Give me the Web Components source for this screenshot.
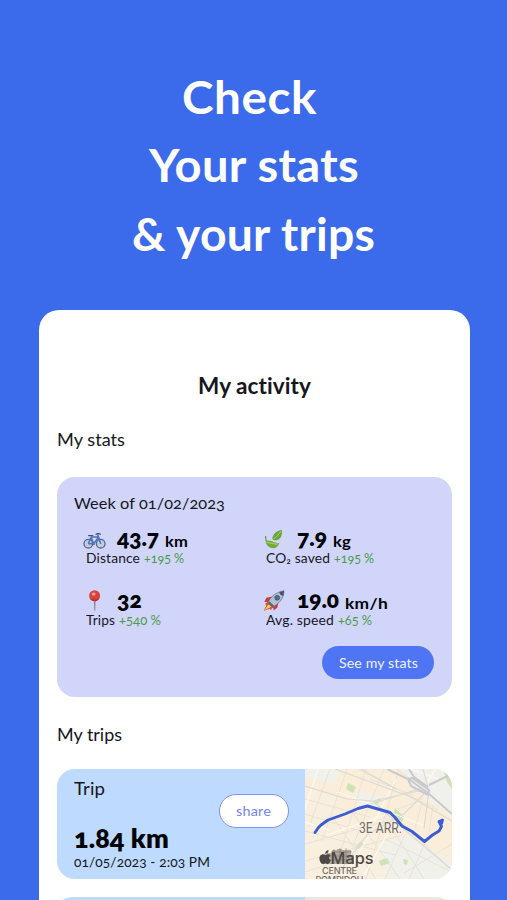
<!DOCTYPE html>
<html lang="en">
<head>
<meta charset="utf-8">
<meta name="viewport" content="width=device-width, initial-scale=1">
<title>My activity</title>
<style>
    body {
        margin: 0;
        height: 900px;
        overflow: hidden;
        background-color: #3b6bea;
        font-family: Lato, "Open Sans", sans-serif;
        font-variant-numeric: oldstyle-nums;
        color: #15171c;
    }
</style>
</head>
<body>
<activity-page></activity-page>

<script>
// One line of text, widened to the width given in its attribute
class FitLine extends HTMLElement {
    constructor() {
        super();
        this.shadowDOM = this.attachShadow({ mode: 'open' });
    }

    connectedCallback() {
        this.shadowDOM.innerHTML = `
            <style>
                :host {
                    display: inline-block;
                    flex: none;
                    width: ${this.getAttribute('width')}px;
                    text-align: left;
                    white-space: nowrap;
                }
                span {
                    display: inline-block;
                    transform-origin: 0 0;
                }
            </style>
            <span><slot></slot></span>
        `;
        this.fit();
    }

    fit() {
        const target = parseFloat(this.getAttribute('width'));
        const span = this.shadowDOM.querySelector('span');
        const natural = span.getBoundingClientRect().width;
        // a little of the difference goes between the letters, the rest widens them
        const gap = (target - natural) * 0.25 / this.textContent.length;
        span.style.letterSpacing = gap + 'px';
        span.style.transform = `scaleX(${target / span.getBoundingClientRect().width})`;
    }
}

class HeroTitle extends HTMLElement {
    constructor() {
        super();
        this.shadowDOM = this.attachShadow({ mode: 'open' });
    }

    connectedCallback() {
        this.shadowDOM.innerHTML = `
            <style>
                :host {
                    display: flex;
                    flex-direction: column;
                    align-items: center;
                    box-sizing: border-box;
                    padding-top: 62.5px;
                    height: 310px;
                    color: white;
                    font-size: 45px;
                    font-weight: 700;
                    line-height: 68.9px;
                }
                .first { margin-right: 9px; }
            </style>
            <fit-line class="first" width="135">Check</fit-line>
            <fit-line width="210">Your stats</fit-line>
            <fit-line width="243">&amp; your trips</fit-line>
        `;
    }
}

const ICONS = {
    bike: `<svg width="23" height="24" viewBox="0 0 23 24" fill="none">
        <g stroke="#5c6780" stroke-width="1.3"><circle cx="5.3" cy="15.7" r="4.3" fill="#c3cbea"/><circle cx="17.7" cy="15.7" r="4.3" fill="#c3cbea"/></g>
        <path d="M5.3 15.7 8.3 9h7.4l-5 6.7-2.9-7M5.3 15.7h5.4M17.7 15.7 14.7 6.5" stroke="#4772bf" stroke-width="1.5" stroke-linejoin="round"/>
        <path d="M5.7 7.7h4M13 6.3l2-.8 2.3.7" stroke="#4a4f60" stroke-width="1.3" stroke-linecap="round"/>
        <circle cx="10.7" cy="15.8" r="1.4" fill="#68718b"/></svg>`,
    leaf: `<svg width="23" height="24" viewBox="0 0 23 24">
        <path d="M2.6 8c-.3 4.500 1.400 8 5.200 10.800" fill="none" stroke="#66983b" stroke-width="1.2"/>
        <path d="M2.5 13c2.1-1 4.200-.7 6.500.3 2.200 1 4.400 2 7.400 1.900-1.700 4-4.300 5.600-7.700 4.900-3.400-.7-5.600-3.200-6.200-7.100Z" fill="#74a93c"/>
        <path d="M9.400 11.300C9.300 6.700 12.500 3.400 18.700 1.700c.9 4.700-.2 9.300-5.300 10.600-1.500.3-3 0-4-1Z" fill="#6ba43d"/>
        <path d="M3.5 14.200c4 .6 7.100 2 11.400 2M10.400 11c3.200-1.800 5.200-4.200 7.300-7.800" fill="none" stroke="#b9d975" stroke-width=".9"/></svg>`,
    pin: `<svg width="23" height="24" viewBox="0 0 23 24">
        <path d="M10.8 9h1.800l-.3 11.300q-.5 1-1 0Z" fill="#87868f"/>
        <circle cx="11.600" cy="5.700" r="5.500" fill="#d8433a"/>
        <path d="M6.700 8.200a5.500 5.500 0 0 0 9.800 0q-5 2.500-9.800 0" fill="#b72d30"/>
        <ellipse cx="10.600" cy="4" rx="2" ry="1.500" fill="#f69a8d"/></svg>`,
    rocket: `<svg width="23" height="24" viewBox="0 0 23 24">
        <g transform="translate(0 -1)">
        <path d="M5.5 12.2 1.9 15l1.4 1.2L.8 21.8l6.1-2 .4 1.5 3.5-3.6Z" fill="#e44f31"/>
        <path d="m5.1 15.7-3.5 5.4 5.4-2.7 1.5-1.9Z" fill="#ffd14f"/>
        <path d="m9.1 7.5-5.7 1.2-2.1 4 4.5.6ZM15.4 13.3l-1 5.1-3.6 3-.9-4.5Z" fill="#cc3c37"/>
        <path d="M4.9 13.9C7.2 8 12.7 3.2 20.9 1.8c.2 6.9-4.1 12.4-11.6 16.5Z" fill="#b6c0d0" stroke="#606b82" stroke-width=".7"/>
        <path d="M16.2 3.3 20.9 1.8q.2 2.7-.7 5Q17 6.6 16.2 3.3" fill="#4c5369"/>
        <path d="m5 14 4.3 4.3 2-1.2-4.9-4.9Z" fill="#5b647a"/>
        <circle cx="14.2" cy="8.8" r="2.4" fill="#49729d" stroke="#394d6b" stroke-width=".8"/></g></svg>`
};

class StatItem extends HTMLElement {
    constructor() {
        super();
        this.shadowDOM = this.attachShadow({ mode: 'open' });
    }

    connectedCallback() {
        const data = (name) => this.getAttribute(name);
        this.shadowDOM.innerHTML = `
            <style>
                :host { display: block; }
                .value {
                    display: flex;
                    align-items: baseline;
                    height: 24.500px;
                    color: #030407;
                    font-weight: 800;
                    line-height: 26px;
                }
                .icon {
                    align-self: flex-start;
                    width: 33.500px;
                    height: 24px;
                    padding-top: 2px;
                }
                .number {
                    margin-right: 6px;
                    padding-bottom: 1.500px;
                    font-size: 22.500px;
                    transform: translateY(-1.500px);
                }
                .unit { font-size: 16px; font-weight: 700; }
                .detail {
                    display: flex;
                    gap: 4px;
                    padding-left: 3px;
                    font-size: 13px;
                    line-height: 16px;
                }
                .change { color: #4c9b4a; }
            </style>
            <div class="value">
                <span class="icon">${ICONS[data('icon')]}</span>
                <fit-line class="number" width="${data('number-width')}">${data('number')}</fit-line>
                ${data('unit') ? `<fit-line class="unit" width="${data('unit-width')}">${data('unit')}</fit-line>` : ''}
            </div>
            <div class="detail">
                <fit-line width="${data('label-width')}">${data('label')}</fit-line>
                <fit-line class="change" width="${data('change-width')}">${data('change')}</fit-line>
            </div>
        `;
    }
}

class StatsCard extends HTMLElement {
    constructor() {
        super();
        this.shadowDOM = this.attachShadow({ mode: 'open' });
    }

    connectedCallback() {
        this.shadowDOM.innerHTML = `
            <style>
                :host {
                    display: flex;
                    flex-direction: column;
                    box-sizing: border-box;
                    flex: none;
                    height: 220.5px;
                    padding: 16.5px 18px 17.5px 17.5px;
                    border-radius: 18px;
                    background-color: #d1d5fa;
                }
                .week {
                    font-size: 16px;
                    line-height: 20px;
                }
                .grid {
                    display: grid;
                    grid-template-columns: 180px 1fr;
                    grid-auto-rows: 62px;
                    padding: 12.5px 0 0 9px;
                }
                button {
                    align-self: flex-end;
                    width: 112px;
                    height: 33px;
                    margin-top: -3.5px;
                    padding: 0;
                    border: 0;
                    border-radius: 17px;
                    background-color: #4f75f4;
                    color: #eef2ff;
                    font: inherit;
                    font-size: 13.5px;
                    flex: none;
                }
            </style>
            <fit-line class="week" width="151">Week of 01/02/2023</fit-line>
            <div class="grid">
                <stat-item icon="bike" number="43.7" number-width="42" unit="km" unit-width="23" label="Distance" label-width="54" change="+195 %" change-width="40"></stat-item>
                <stat-item icon="leaf" number="7.9" number-width="30" unit="kg" unit-width="18" label="CO₂ saved" label-width="64" change="+195 %" change-width="40"></stat-item>
                <stat-item icon="pin" number="32" number-width="25" label="Trips" label-width="29" change="+540 %" change-width="42"></stat-item>
                <stat-item icon="rocket" number="19.0" number-width="42" unit="km/h" unit-width="43" label="Avg. speed" label-width="68" change="+65 %" change-width="34"></stat-item>
            </div>
            <button><fit-line width="79">See my stats</fit-line></button>
        `;
    }
}

class TripMap extends HTMLElement {
    constructor() {
        super();
        this.shadowDOM = this.attachShadow({ mode: 'open' });
    }

    connectedCallback() {
        this.shadowDOM.innerHTML = `
            <style>
                :host {
                    display: block;
                    font-variant-numeric: lining-nums;
                }
                svg { display: block; }
            </style>
            <svg width="147" height="110" viewBox="0 0 147 110" fill="none">
                <rect width="147" height="110" fill="#f8efdf"/>
                <path d="M0 0h104l16 24 27 13v73H85L70 66 25 25 0 18Z" fill="#faeedb"/>
                <path d="M0 0h36l-7 15L0 8ZM53 22l24 6-6 12-23-7ZM96 0h40l11 18v29l-28-20-17-14ZM73 76l28-10 46 27v17H84Z" fill="#f1f1eb"/>
                <g fill="#cde2b5">
                    <path d="m43 14 8 4-3 6-7-4ZM69 33l5-4 2 3-5 4ZM90 39l9 9-2 5-9-7ZM138 0h9v20l-5-7ZM50 78l6-6 3 4-6 4ZM74 92l8-3 3 5-9 3ZM98 90l5 1-1 5-3-1Z"/>
                </g>
                <g stroke="#e9e2d4" stroke-width="1">
                    <path d="M0 30l65 18M0 45l55 17M0 75l85-24M0 92l95-25M0 62l90 24M25 0 4 58M42 0 17 72M61 0 33 91M79 0 48 77M94 0 61 110M29 50l42 60M47 43l48 67M76 42l43 68M98 55l49 46M53 0l80 41M0 103l40-13M65 10l43 16M100 65l-20 45M121 72l-17 38M147 75l-48 29M78 69l67 33M109 13 91 0M118 30l-25 10M117 33l-7 27M128 36l-4 28"/>
                </g>
                <g stroke="#fffaf0" stroke-width="1.2">
                    <path d="M13 0 0 40M33 23l87 34M22 66l58-20M64 67l-26 43M84 62l-27 48M91 10l-22 43M0 53l24 8M105 0l28 10M130 0l-10 19"/>
                </g>
                <g stroke="#dadad6" stroke-width="1.2">
                    <path d="M0 17l42 13 26 2 36-8 16-3M68 32l26 24 53 45M66 35l51-16M30 0l76 28 41 24M124 22l-5 37M118 0l5 18"/>
                    <path d="m91 20-35-20M121 23l-21 21-38 22-33 44"/>
                </g>
                <g stroke="#c9c9ce" stroke-width="2">
                    <path d="m82 0 23 11 18 13 24 21M104 0l5 8 14 10M103 10l3 7 17 9 1-5-17-12ZM124 16l23-11"/>
                </g>
                <text x="54" y="64.300" textLength="43" lengthAdjust="spacingAndGlyphs" font-size="14.500" font-family="Roboto, sans-serif" fill="#6d6b67" stroke="#fbf3e4" stroke-width="1.5" paint-order="stroke">3E ARR.</text>
                <path d="m10 63.5 3.5-5L16 56l7-5 17-6 13-5.5 9.5-2.5L85 43.5l5 5 7 8.5 10 5.5 12.5 10 8-6.5 6.5-4 2.5-4.5-2.5-5 3.5-1.5-1 3.5" stroke="#3c5dd2" stroke-width="2.9" stroke-linecap="round" stroke-linejoin="round"/>
                <path d="M22 84h5v-3h5v-1h5v1h9v5h3v9H22Z" fill="#8d867b" opacity=".65"/>
                <path d="M26 83h21M24 87h24M23 91h25M29 80v15M35 79v16M41 79v16" stroke="#6d6861" stroke-width=".8" opacity=".6"/>
                <g fill="#4b4845">
                    <path d="M20.3 85.8c-1.7-1-4.1-.7-5.3 1.1-1.6 2.7.2 7.5 2.8 8.2.9.2 1.6-.5 2.500-.5 1 0 1.600.7 2.500.5 1.400-.3 2.600-2.300 3-4-2.300-.9-2.200-3.600-.2-4.700-1.400-1.600-3.400-1.500-5.300-.6Z"/>
                    <path d="M20.2 85.1c0-2 1.4-3.7 3.3-4 .2 2.2-1.2 3.8-3.3 4Z"/>
                </g>
                <text x="25.500" y="95" textLength="43" lengthAdjust="spacingAndGlyphs" font-size="16" font-weight="500" font-family="Inter, sans-serif" fill="#4b4845">Maps</text>
                <g font-family="Inter, sans-serif" font-size="9" font-weight="500" fill="#706c68">
                    <text x="17" y="105.2" textLength="35">CENTRE</text>
                    <text x="10.5" y="114.3" textLength="48">POMPIDOU</text>
                </g>
            </svg>
        `;
    }
}

class TripCard extends HTMLElement {
    constructor() {
        super();
        this.shadowDOM = this.attachShadow({ mode: 'open' });
    }

    connectedCallback() {
        this.shadowDOM.innerHTML = `
            <style>
                :host {
                    display: flex;
                    flex: none;
                    height: 110px;
                    border-radius: 18px;
                    overflow: hidden;
                    background-color: #bedbff;
                }
                .info {
                    display: flex;
                    flex-direction: column;
                    align-items: flex-start;
                    width: 144.5px;
                    padding: 8px 0 0 17.5px;
                    white-space: nowrap;
                }
                .name { font-size: 18px; line-height: 22px; }
                .distance {
                    margin-top: 22.500px;
                    color: #030407;
                    font-size: 26px;
                    font-weight: 800;
                    line-height: 32px;
                }
                .date { font-size: 13px; line-height: 16px; }
                .action { width: 86px; padding-top: 25px; }
                button {
                    width: 70px;
                    height: 34px;
                    padding: 0;
                    border: 1.5px solid #8190f5;
                    border-radius: 17px;
                    background-color: white;
                    color: #7884ee;
                    font: inherit;
                    font-size: 13.5px;
                }
            </style>
            <div class="info">
                <fit-line class="name" width="31">Trip</fit-line>
                <fit-line class="distance" width="95">1.84 km</fit-line>
                <fit-line class="date" width="136">01/05/2023 - 2:03 PM</fit-line>
            </div>
            <div class="action"><button><fit-line width="35">share</fit-line></button></div>
            <trip-map></trip-map>
        `;
    }
}

class ActivityPage extends HTMLElement {
    constructor() {
        super();
        this.shadowDOM = this.attachShadow({ mode: 'open' });
    }

    connectedCallback() {
        this.shadowDOM.innerHTML = `
            <style>
                :host {
                    display: block;
                    height: 900px;
                    overflow: hidden;
                }
                main {
                    display: flex;
                    flex-direction: column;
                    box-sizing: border-box;
                    width: 430.5px;
                    height: 590px;
                    margin-left: 39px;
                    padding: 63px 17.5px 0;
                    border-radius: 20px 20px 0 0;
                    overflow: hidden;
                    background-color: white;
                }
                .title {
                    align-self: center;
                    font-size: 22px;
                    font-weight: 700;
                    line-height: 26px;
                }
                .section {
                    align-self: flex-start;
                    font-size: 18px;
                    line-height: 22px;
                }
                .stats { margin: 29px 0 26.5px; }
                .trips { margin: 26px 0 24px; }
                .next {
                    height: 3px;
                    margin: 18px 6px 0;
                    border-radius: 12px 12px 0 0 / 3px 3px 0 0;
                    background: linear-gradient(to right, #bedbff 242px, #eae7df 242px);
                }
            </style>
            <hero-title></hero-title>
            <main>
                <fit-line class="title" width="113">My activity</fit-line>
                <fit-line class="section stats" width="68">My stats</fit-line>
                <stats-card></stats-card>
                <fit-line class="section trips" width="65">My trips</fit-line>
                <trip-card></trip-card>
                <div class="next"></div>
            </main>
        `;
    }
}

customElements.define('fit-line', FitLine);
customElements.define('hero-title', HeroTitle);
customElements.define('stat-item', StatItem);
customElements.define('stats-card', StatsCard);
customElements.define('trip-map', TripMap);
customElements.define('trip-card', TripCard);
customElements.define('activity-page', ActivityPage);
</script>
</body>
</html>
